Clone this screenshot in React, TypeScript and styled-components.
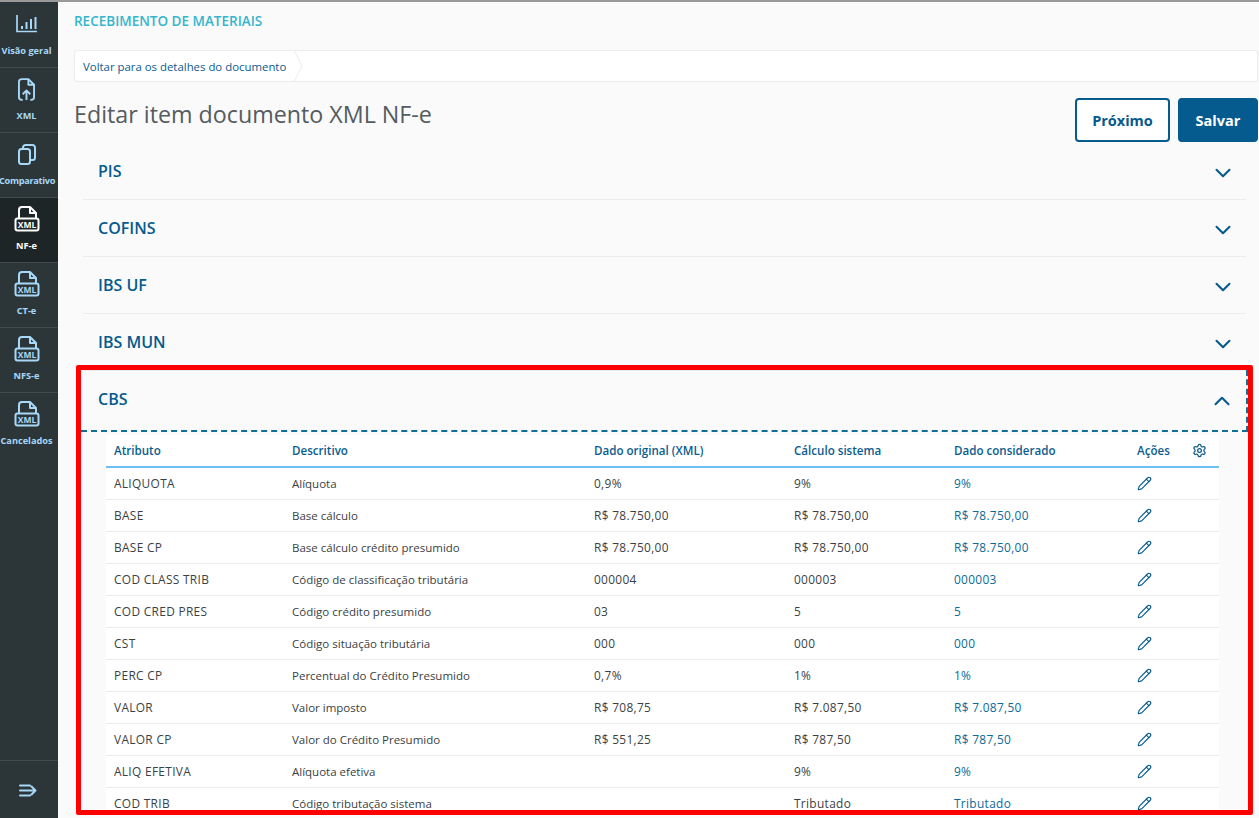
import React from "react";
import styled, { createGlobalStyle } from "styled-components";
import { ChevronDown, ChevronUp, Pencil, Settings } from "lucide-react";

const Global = createGlobalStyle`
  html, body { margin: 0; padding: 0; height: 100%; background: #fafafa; overflow: hidden; }
  * { box-sizing: border-box; }
  body { font-family: "Open Sans", "Noto Sans", sans-serif; }
`;

const Page = styled.div`
  width: 1259px; height: 818px; display: flex; overflow: hidden;
  border-top: 2px solid #9a9a9a; background: #fafafa;
`;
const Side = styled.nav`
  width: 58px; flex: none; background: #2c3639; display: flex; flex-direction: column; padding-top: 1px;
`;
const SideItem = styled.div<{ $active?: boolean }>`
  height: 65px; flex: none; display: flex; flex-direction: column; align-items: center;
  padding: 7px 5px 0 0; gap: 7px;
  background: ${(p) => (p.$active ? "#1e2527" : "transparent")};
  color: ${(p) => (p.$active ? "#ffffff" : "#a8d8f8")};
  border-bottom: 1px solid #3f4a4d;
  &:last-of-type { border-bottom: none; }
  svg { display: block; flex: none; }
`;
const SideIcon = styled.span`
  height: 28px; display: flex; align-items: center; justify-content: center;
`;
const SideLabel = styled.span<{ $tight?: boolean }>`
  font-size: 9.2px; font-weight: 700; line-height: 12px; white-space: nowrap;
  letter-spacing: ${(p) => (p.$tight ? "-0.3px" : "0")};
  padding-left: ${(p) => (p.$tight ? "1px" : "0")};
`;
const SideFoot = styled.footer`
  margin-top: auto; height: 58px; border-top: 1px solid #3f4a4d; display: flex;
  align-items: center; justify-content: center; color: #a8d8f8; flex: none; padding: 2px 2px 0 0;
`;
const Main = styled.main`
  flex: 1; min-width: 0; padding: 0 1px 0 16px; display: flex; flex-direction: column;
`;
const Brand = styled.div`
  height: 48px; padding-top: 11px; font-size: 13.5px; font-weight: 600; line-height: 16px; color: #35b5cc;
`;
const Crumbs = styled.div`
  height: 32px; flex: none; background: #fff; border: 1px solid #ececec; border-radius: 3px;
  display: flex; align-items: center; position: relative;
`;
const Crumb = styled.a`
  font-size: 11.4px; color: #0b5c8e; padding-left: 8px; width: 220px; height: 30px;
  display: flex; align-items: center; white-space: nowrap;
`;
const CrumbTip = styled.svg`
  position: absolute; left: 219px; top: -1px;
`;
const HeadRow = styled.div`
  display: flex; justify-content: space-between; height: 61px; padding-top: 16px; flex: none;
`;
const Title = styled.h1`
  margin: 0; font-size: 23.25px; font-weight: 400; line-height: 32px; color: #555c60;
`;
const Buttons = styled.div`
  display: flex; gap: 8px;
`;
const Btn = styled.button<{ $primary?: boolean }>`
  height: 44px; border-radius: 4px; border: 2px solid #055a8e; font-family: inherit;
  font-size: 14.5px; font-weight: 700; padding: 0;
  width: ${(p) => (p.$primary ? "80px" : "95px")};
  background: ${(p) => (p.$primary ? "#055a8e" : "#fff")};
  color: ${(p) => (p.$primary ? "#fff" : "#055a8e")};
`;
const Accordion = styled.div`
  margin: 0 12px 0 9px; flex: none;
`;
const AccRow = styled.div`
  height: 57px; display: flex; align-items: center; justify-content: space-between;
  padding: 0 10px 0 15px; border-bottom: 1px solid #ececec;
  color: #055a8e;
`;
const AccName = styled.span`
  font-size: 16px; font-weight: 600;
`;
const Chevron = styled.span`
  display: block; height: 26px; position: relative; top: 2px;
  svg { display: block; }
`;
const Frame = styled.section`
  margin: -6px 0 0 2px; width: 1177px; height: 450px; border: 5px solid #ff0000;
  border-radius: 2px; overflow: hidden; position: relative; flex: none;
`;
const CbsHead = styled.div`
  height: 62px; display: flex; align-items: center; justify-content: space-between;
  padding: 0 11px 2px 17px; color: #055a8e;
  border-bottom: 2px dashed #0f6f97; border-right: 2px dashed #0f6f97;
`;
const Table = styled.table`
  margin: 3px 0 0 25px; width: 1113px; border-collapse: collapse; table-layout: fixed; background: #fff;
`;
const Th = styled.th<{ $w: number }>`
  width: ${(p) => p.$w}px; height: 32px; padding: 0 8px; text-align: left;
  font-size: 11.6px; font-weight: 600; color: #0b5c8e; border-bottom: 2px solid #6cc0f5;
  white-space: nowrap;
`;
const ThFlex = styled.div`
  display: flex; align-items: center; justify-content: space-between; padding-right: 4px;
  svg { display: block; }
`;
const Tr = styled.tr`
  height: 32px;
`;
const Td = styled.td<{ $blue?: boolean; $wide?: boolean }>`
  padding: 0 8px; color: ${(p) => (p.$blue ? "#0b6a96" : "#3a4145")};
  font-size: ${(p) => (p.$wide ? "11.9px" : "11.5px")};
  letter-spacing: ${(p) => (p.$wide ? "0.32px" : "0")};
  border-bottom: 1px solid #ececec; white-space: nowrap;
`;
const EditCell = styled(Td)`
  color: #0b5c8e; svg { display: block; margin-left: 0; }
`;

const ChartIcon = () => (
  <svg width="21" height="18" viewBox="0 0 21 18" fill="none" stroke="currentColor" strokeWidth="2">
    <path d="M1 0v16.5h20" strokeWidth="1.7" />
    <path d="M6 14v-3M10.5 14V7M15 14V4M19.5 14V2" />
  </svg>
);
const UploadIcon = () => (
  <svg width="17" height="23" viewBox="0 0 18 24" fill="none" stroke="currentColor" strokeWidth="2" strokeLinejoin="round">
    <path d="M5 23H4a3 3 0 0 1-3-3V4a3 3 0 0 1 3-3h7l6 6v13a3 3 0 0 1-3 3h-1" />
    <path d="M11 1v6h6" />
    <path d="M9 23v-9M5 17l4-4 4 4" />
  </svg>
);
const CopyIcon = () => (
  <svg width="18" height="21" viewBox="0 0 18 21" fill="none" stroke="currentColor" strokeWidth="2" strokeLinejoin="round">
    <rect x="1" y="5" width="11" height="15" rx="2.5" />
    <path d="M5 5V3.5A2.5 2.5 0 0 1 7.5 1h7A2.5 2.5 0 0 1 17 3.5v10a2.5 2.5 0 0 1-2.5 2.5H12" />
  </svg>
);
const XmlIcon = ({ active }: { active?: boolean }) => (
  <svg width="26" height="26" viewBox="0 0 26 26" fill="none">
    <path d="M5 12V4a3 3 0 0 1 3-3h8l6 6v5" stroke="currentColor" strokeWidth="2" strokeLinejoin="round" />
    <path d="M16 1v6h6" stroke="currentColor" strokeWidth="2" strokeLinejoin="round" />
    <rect x="1.5" y="12.5" width="23" height="12" rx="2" fill={active ? "#1e2527" : "#2c3639"} stroke="currentColor" strokeWidth="2" />
    <text x="13" y="21.5" textAnchor="middle" fontSize="8.5" fontWeight="700" fill="currentColor" fontFamily="Open Sans, sans-serif">XML</text>
  </svg>
);
const CollapseIcon = () => (
  <svg width="18" height="13" viewBox="0 0 18 13" fill="none" stroke="currentColor" strokeWidth="2" strokeLinecap="round" strokeLinejoin="round">
    <path d="M1 1.5h10M1 6.5h15M1 11.5h10M12.5 2.5l4 4-4 4" />
  </svg>
);

const nav: { label: string; icon: React.ReactNode; active?: boolean; tight?: boolean }[] = [
  { label: "Visão geral", icon: <ChartIcon /> },
  { label: "XML", icon: <UploadIcon /> },
  { label: "Comparativo", icon: <CopyIcon />, tight: true },
  { label: "NF-e", icon: <XmlIcon active />, active: true },
  { label: "CT-e", icon: <XmlIcon /> },
  { label: "NFS-e", icon: <XmlIcon /> },
  { label: "Cancelados", icon: <XmlIcon /> },
];

const sections = ["PIS", "COFINS", "IBS UF", "IBS MUN"];

const rows = [
  ["ALIQUOTA", "Alíquota", "0,9%", "9%", "9%"],
  ["BASE", "Base cálculo", "R$ 78.750,00", "R$ 78.750,00", "R$ 78.750,00"],
  ["BASE CP", "Base cálculo crédito presumido", "R$ 78.750,00", "R$ 78.750,00", "R$ 78.750,00"],
  ["COD CLASS TRIB", "Código de classificação tributária", "000004", "000003", "000003"],
  ["COD CRED PRES", "Código crédito presumido", "03", "5", "5"],
  ["CST", "Código situação tributária", "000", "000", "000"],
  ["PERC CP", "Percentual do Crédito Presumido", "0,7%", "1%", "1%"],
  ["VALOR", "Valor imposto", "R$ 708,75", "R$ 7.087,50", "R$ 7.087,50"],
  ["VALOR CP", "Valor do Crédito Presumido", "R$ 551,25", "R$ 787,50", "R$ 787,50"],
  ["ALIQ EFETIVA", "Alíquota efetiva", "", "9%", "9%"],
  ["COD TRIB", "Código tributação sistema", "", "Tributado", "Tributado"],
];

export default function App() {
  return (
    <Page>
      <Global />
      <Side>
        {nav.map((n) => (
          <SideItem key={n.label} $active={n.active}>
            <SideIcon>{n.icon}</SideIcon>
            <SideLabel $tight={n.tight}>{n.label}</SideLabel>
          </SideItem>
        ))}
        <SideFoot><CollapseIcon /></SideFoot>
      </Side>
      <Main>
        <Brand>RECEBIMENTO DE MATERIAIS</Brand>
        <Crumbs>
          <Crumb>Voltar para os detalhes do documento</Crumb>
          <CrumbTip width="10" height="32" viewBox="0 0 10 32" fill="none">
            <path d="M0 0l8 16-8 16" stroke="#ececec" />
          </CrumbTip>
        </Crumbs>
        <HeadRow>
          <Title>Editar item documento XML NF-e</Title>
          <Buttons>
            <Btn>Próximo</Btn>
            <Btn $primary>Salvar</Btn>
          </Buttons>
        </HeadRow>
        <Accordion>
          {sections.map((s) => (
            <AccRow key={s}>
              <AccName>{s}</AccName>
              <Chevron><ChevronDown size={26} strokeWidth={1.9} /></Chevron>
            </AccRow>
          ))}
        </Accordion>
        <Frame>
          <CbsHead>
            <AccName>CBS</AccName>
            <Chevron><ChevronUp size={26} strokeWidth={1.9} /></Chevron>
          </CbsHead>
          <Table>
            <thead>
              <tr>
                <Th $w={178}>Atributo</Th>
                <Th $w={302}>Descritivo</Th>
                <Th $w={200}>Dado original (XML)</Th>
                <Th $w={160}>Cálculo sistema</Th>
                <Th $w={183}>Dado considerado</Th>
                <Th $w={90}>
                  <ThFlex>Ações <Settings size={15} strokeWidth={2} /></ThFlex>
                </Th>
              </tr>
            </thead>
            <tbody>
              {rows.map((r) => (
                <Tr key={r[0]}>
                  <Td $wide>{r[0]}</Td>
                  <Td>{r[1]}</Td>
                  <Td $wide>{r[2]}</Td>
                  <Td $wide>{r[3]}</Td>
                  <Td $blue $wide>{r[4]}</Td>
                  <EditCell><Pencil size={15} strokeWidth={1.8} /></EditCell>
                </Tr>
              ))}
            </tbody>
          </Table>
        </Frame>
      </Main>
    </Page>
  );
}
